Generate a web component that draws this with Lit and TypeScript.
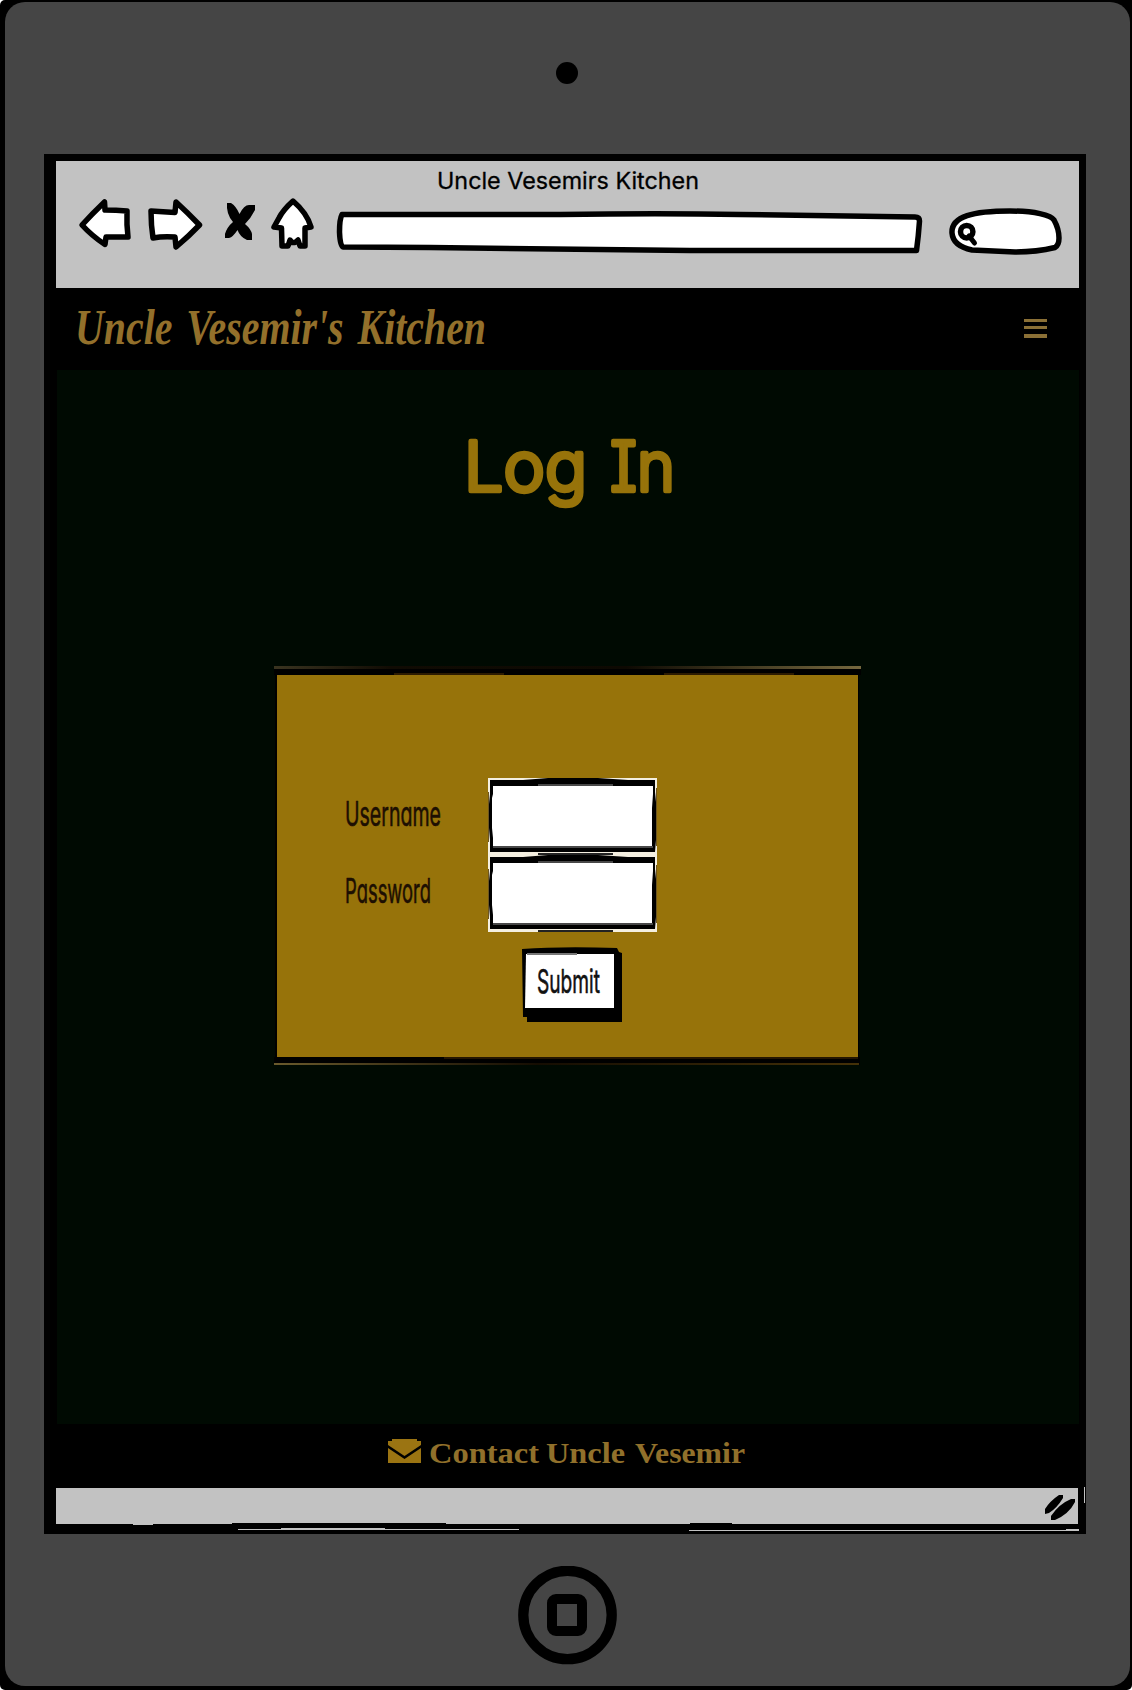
import { LitElement, html, svg, css } from "lit";
import { customElement, property } from "lit/decorators.js";

/** One run of lettering, fitted to a given width: [text, x, width]. */
type Run = [string, number, number];

@customElement("fitted-text")
class FittedText extends LitElement {
  @property({ attribute: false }) runs: Run[] = [];
  @property({ type: Number }) w = 0;
  @property({ type: Number }) h = 0;
  @property({ type: Number }) base = 0;
  @property({ type: Number }) size = 16;
  static styles = css`
    :host { display: block; line-height: 0; }
    svg { display: block; overflow: visible; }
    text { fill: currentColor; stroke: currentColor; stroke-width: var(--weight, 0); stroke-linejoin: round; }
  `;
  render() {
    return html`<svg width=${this.w} height=${this.h}>
      ${this.runs.map(
        ([t, x, len]) => svg`<text x=${x} y=${this.base} font-size=${this.size}
          textLength=${len} lengthAdjust="spacingAndGlyphs">${t}</text>`
      )}
    </svg>`;
  }
}

@customElement("browser-bar")
class BrowserBar extends LitElement {
  static styles = css`
    :host { display: block; height: 127px; background: #c2c2c2; font-family: Inter, sans-serif; }
    .title { padding: 6px 0 0 379px; color: #000; --weight: 0.3px; }
    .tools { display: flex; align-items: flex-start; padding-left: 21px; }
    svg { display: block; flex: none; }
    .shape { fill: #fff; stroke: #000; stroke-width: 5.500; stroke-linejoin: round; stroke-linecap: round; }
    .forward { margin-left: 13px; }
    .stop { margin-left: 20px; }
    .home { margin-left: 14px; }
    .address { margin-left: 20px; }
    .search { margin-left: 24px; }
  `;
  render() {
    return html`
      <fitted-text class="title" .runs=${[["Uncle Vesemirs Kitchen", 2, 262]] as Run[]} w="266" h="29" base="22" size="23"></fitted-text>
      <div class="tools">
        <svg width="56" height="54" viewBox="77 196 56 54">
          <path class="shape" d="M82 225Q92 214 104.500 202L105 210Q116 210 127 211Q126.500 225 128 237L106 237L105 244.500Q92 236 82 225Z" />
        </svg>
        <svg class="forward" width="58" height="54" viewBox="146 196 58 54">
          <path class="shape" d="M151 211L175 212.500L176 202Q188 213 199.500 225Q189 236 176 247L175 237Q163 236 153 238Q151 225 151 211Z" />
        </svg>
        <svg class="stop" width="34" height="54" viewBox="224 196 34 54">
          <path d="M227 203H231Q236 206 239.500 214Q244 205 249 205H255V210Q251 218 245 224Q251 229 252 234V240H247Q240 237 237.500 230Q233 237 229 238H225V234Q227 227 233 222Q226 214 227 203Z" />
        </svg>
        <svg class="home" width="45" height="54" viewBox="272 196 45 54" overflow="visible">
          <path class="shape" d="M293 201Q283 210 279 218L274 227L281.500 228L282 246L288 246L290 240L292 242.500H295L298 240L300 246H305V228L311 227Q307 213 293 201Z" />
        </svg>
        <svg class="address" width="588" height="54" viewBox="337 196 588 54" overflow="visible">
          <path class="shape" d="M342 214.500L560 214.500Q660 213 740 214.500L915 217Q919.500 217 919.500 221Q918.500 236 916.500 250.500L690 250.500L430 247.500L343 247Q340 246 339.500 232Q339.500 219 342 214.500Z" />
        </svg>
        <svg class="search" width="116" height="54" viewBox="949 196 116 54" overflow="visible">
          <path class="shape" d="M952 233C951 216 974 211 1010 211C1034 211 1051 215 1054 220Q1059 229 1059 238Q1059 245 1055 247.500Q1036 252 1015 252L972 250Q953 246 952 233Z" />
          <circle cx="966.700" cy="231.700" r="6.200" fill="#fff" stroke="#000" stroke-width="5.500" />
          <path d="M969 236L974.500 243" stroke="#000" stroke-width="5" stroke-linecap="round" />
        </svg>
      </div>
    `;
  }
}

@customElement("login-panel")
class LoginPanel extends LitElement {
  static styles = css`
    :host { display: block; width: 587px; font-family: Inter, sans-serif; font-feature-settings: "cv11"; }
    svg { display: block; }
    .panel { width: 581px; height: 382px; margin-left: 3px; background: #97730a; display: flex; flex-direction: column; align-items: flex-start; box-sizing: border-box; padding-top: 103px; box-shadow: 1px 0 #000, -2px 0 #000; }
    .row { display: flex; height: 77px; padding-left: 68px; }
    .row fitted-text { width: 143px; color: #1d0f02; --weight: 0.6px; }
    .submit { display: grid; margin: 14px 0 0 245px; color: #111; --weight: 0.6px; }
    .submit > * { grid-area: 1 / 1; }
  `;
  private field(label: string, len: number) {
    return html`<div class="row">
      <fitted-text .runs=${[[label, 0, len]] as Run[]} w="143" h="77" base="48" size="34"></fitted-text>
      <svg width="169" height="77">
        <rect width="169" height="77" fill="#f4efe0" />
        <path d="M0 14V64H1V14ZM168 10V68H169V10Z" fill="#6d5520" />
        <path d="M2 2H35L60 0H110L140 2H167V14L168 24V62L167 74H2V62L1 50V26L2 16Z" />
        <path d="M5 8H165V16L164 30V68H5V60L4 50V20L5 16Z" fill="#fff" />
        <path d="M50 6H125V8H50ZM5 68H165V70H5Z" fill="#484848" />
        <path d="M50 75H125V77H50Z" fill="#222" />
      </svg>
    </div>`;
  }
  render() {
    return html`
      <svg width="587" height="9">
        <defs><linearGradient id="a"><stop offset="0" stop-color="#3a3420" /><stop offset=".2" stop-color="#100b03" /><stop offset=".6" stop-color="#0d0902" /><stop offset="1" stop-color="#75683f" /></linearGradient></defs>
        <rect width="587" height="9" fill="#000" /><rect width="587" height="3" fill="url(#a)" />
        <path d="M120 7H230V9H120ZM390 7H520V9H390Z" fill="#2c1b02" />
      </svg>
      <div class="panel">
        ${this.field("Username", 96)} ${this.field("Password", 86)}
        <div class="submit">
          <svg width="100" height="77">
            <path d="M0 3Q40 0 95 2L97 6L100 7V76H5V71H1Z" />
            <path d="M4 8H92V62H3Z" fill="#fff" /><path d="M5 7H55V9H5Z" fill="#777" />
          </svg>
          <fitted-text .runs=${[["Submit", 15, 63]] as Run[]} w="100" h="77" base="47" size="33"></fitted-text>
        </div>
      </div>
      <svg width="587" height="8">
        <defs><linearGradient id="b"><stop offset="0" stop-color="#6a5a2c" /><stop offset=".45" stop-color="#150d02" /><stop offset="1" stop-color="#453108" /></linearGradient></defs>
        <rect width="586" height="8" fill="#000" /><rect y="6" width="585" height="2" fill="url(#b)" />
        <path d="M170 0H584V2H170Z" fill="#241602" />
      </svg>
    `;
  }
}

@customElement("app-root")
class AppRoot extends LitElement {
  static styles = css`
    :host { display: block; width: 1132px; height: 1690px; background: #fff; font-family: Inter, sans-serif; }
    svg { display: block; }
    .device { box-sizing: border-box; height: 1690px; background: #000; border-radius: 5px 0 5px 5px; padding: 2px 2px 4px 5px; }
    .body { height: 1684px; border-radius: 20px; background: #454545; display: flex; flex-direction: column; }
    .camera { width: 22px; height: 22px; border-radius: 50%; background: #000; margin: 60px 0 70px 551px; }
    .screen { width: 1042px; height: 1380px; box-sizing: border-box; margin-left: 39px; background: #000; padding: 7px 7px 0 12px; display: flex; flex-direction: column; }
    .nav { height: 82px; display: flex; align-items: flex-start; color: #93702b; }
    .brand { font-family: "Liberation Serif", serif; font-style: italic; font-weight: 700; word-spacing: 5px; }
    .menu { margin: 31px 0 0 548px; }
    main { height: 1054px; margin-left: 1px; background: #000a02; }
    .heading { padding: 60px 0 0 408px; color: #97730a; font-weight: 300; font-feature-settings: "cv08"; --weight: 4.500px; }
    login-panel { margin: 136px 0 0 217px; }
    footer { height: 64px; display: flex; color: #91702b; font-family: "Liberation Serif", serif; font-weight: 700; }
    .mail { margin: 15px 0 0 332px; flex: none; }
    .status { height: 36px; background: #c2c2c2; margin-right: 1px; }
    .status svg { margin-left: auto; }
    .edge { overflow: visible; }
    .button { margin: 32px 0 0 513px; }
  `;
  render() {
    return html`
      <div class="device"><div class="body">
        <div class="camera"></div>
        <div class="screen">
          <browser-bar></browser-bar>
          <div class="nav">
            <fitted-text class="brand" .runs=${[["Uncle Vesemir's Kitchen", 19, 411]] as Run[]} w="420" h="82" base="56" size="50"></fitted-text>
            <svg class="menu" width="23" height="19"><path d="M0 0H23V3H0ZM0 7H23V10H0ZM0 15H23V19H0Z" fill="#8b7036" /></svg>
          </div>
          <main>
            <fitted-text class="heading" .runs=${[["Log", -1, 123], ["In", 145, 65]] as Run[]} w="220" h="100" base="61" size="69"></fitted-text>
            <login-panel></login-panel>
          </main>
          <footer>
            <svg class="mail" width="33" height="24" viewBox="0 0 33 24">
              <path d="M0 2H4V0H29V2H33V6L16.500 17L0 6ZM0 9L16.500 20L33 9V24H0Z" fill="#9b7412" />
            </svg>
            <fitted-text .runs=${[["Contact", 8, 110], ["Uncle", 125, 79], ["Vesemir", 214, 110]] as Run[]} w="330" h="64" base="39" size="29"></fitted-text>
          </footer>
          <div class="status">
            <svg width="38" height="36" viewBox="1040 1488 38 36">
              <path d="M1045 1514V1509Q1050 1501 1059 1495H1063V1498Q1057 1508 1049 1513ZM1051 1520V1516Q1059 1504 1071 1499H1075V1502Q1069 1514 1055 1520Z" />
            </svg>
          </div>
          <svg class="edge" width="1023" height="10" viewBox="56 1524 1023 10">
            <path d="M232 1523H446V1524.500H232ZM690 1523H732V1524H690Z" />
            <path d="M133 1524H153V1525H133ZM238 1529H281V1528H385V1529H519V1530H238ZM689 1530H1066V1529H1079V1531H689ZM1084 1487H1085V1503H1084Z" fill="#c2c2c2" />
          </svg>
        </div>
        <svg class="button" width="99" height="99" viewBox="518 1566 99 99">
          <circle cx="567.500" cy="1615" r="44.200" fill="none" stroke="#000" stroke-width="10.300" />
          <rect x="552" y="1599" width="30" height="32" rx="4" fill="none" stroke="#000" stroke-width="10" />
        </svg>
      </div></div>
    `;
  }
}
